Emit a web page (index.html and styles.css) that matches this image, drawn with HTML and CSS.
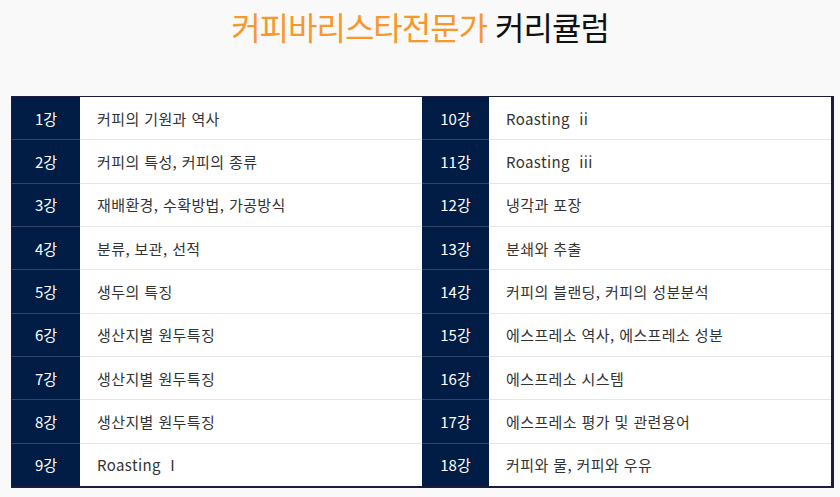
FILE: index.html
```html
<!DOCTYPE html>
<html lang="ko">
<head>
<meta charset="utf-8">
<link rel="stylesheet" href="styles.css">
</head>
<body>
<h1 class="title"><span class="accent">커피바리스타전문가</span> 커리큘럼</h1>
<div class="wrap">
<table class="curri">
<colgroup><col class="c-no"><col class="c-txt"><col class="c-no2"><col class="c-txt"></colgroup>
<tr><th>1강</th><td>커피의 기원과 역사</td><th>10강</th><td>Roasting &nbsp;ii</td></tr>
<tr><th>2강</th><td>커피의 특성, 커피의 종류</td><th>11강</th><td>Roasting &nbsp;iii</td></tr>
<tr><th>3강</th><td>재배환경, 수확방법, 가공방식</td><th>12강</th><td>냉각과 포장</td></tr>
<tr><th>4강</th><td>분류, 보관, 선적</td><th>13강</th><td>분쇄와 추출</td></tr>
<tr><th>5강</th><td>생두의 특징</td><th>14강</th><td>커피의 블랜딩, 커피의 성분분석</td></tr>
<tr><th>6강</th><td>생산지별 원두특징</td><th>15강</th><td>에스프레소 역사, 에스프레소 성분</td></tr>
<tr><th>7강</th><td>생산지별 원두특징</td><th>16강</th><td>에스프레소 시스템</td></tr>
<tr><th>8강</th><td>생산지별 원두특징</td><th>17강</th><td>에스프레소 평가 및 관련용어</td></tr>
<tr class="last"><th>9강</th><td>Roasting &nbsp;I</td><th>18강</th><td>커피와 물, 커피와 우유</td></tr>
</table>
</div>
</body>
</html>
```
FILE: styles.css
```css
html, body {
  margin: 0;
  background: #f9f9f9;
}
body {
  font-family: "Noto Sans CJK KR", "Noto Sans", sans-serif;
  color: #333;
}
.title {
  margin: 0;
  height: 52px;
  line-height: 52px;
  text-align: center;
  font-size: 32px;
  font-weight: 400;
  letter-spacing: -1px;
  color: #111;
}
.accent {
  color: #f7982b;
}
.wrap {
  padding: 44px 0 0 11px;
}
.curri {
  border-collapse: separate;
  border-spacing: 0;
  width: 823px;
  height: 392px;
  table-layout: fixed;
  border-style: solid;
  border-color: #1b1c3e;
  border-width: 1px 3px 2px 1px;
  background: #fff;
}
.c-no { width: 68px; }
.c-no2 { width: 67px; }
.c-txt { width: 342px; }
.curri th,
.curri td {
  padding: 0;
  height: 42px;
  font-size: 15px;
  font-weight: 400;
  border-bottom: 1px solid #e6e6e6;
  white-space: nowrap;
}
.curri th {
  background: #011c45;
  color: #fff;
  text-align: center;
  border-bottom-color: #34456a;
}
.curri td {
  text-align: left;
  padding-left: 17px;
  letter-spacing: 0.4px;
  color: #333;
}
.curri tr.last th,
.curri tr.last td {
  border-bottom: 0;
}
```
